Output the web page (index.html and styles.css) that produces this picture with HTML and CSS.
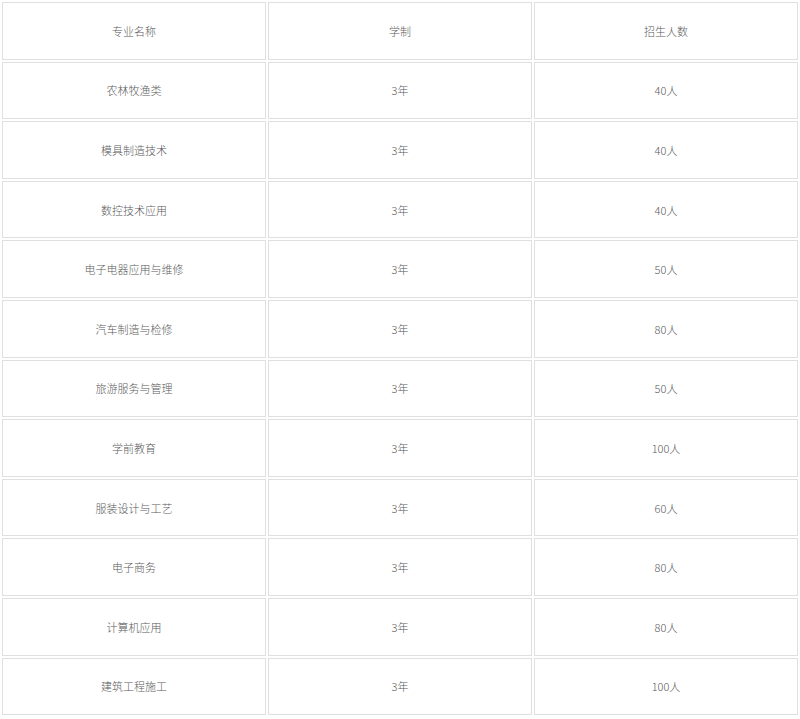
FILE: index.html
```html
<!DOCTYPE html>
<html lang="zh">
<head>
<meta charset="utf-8">
<link rel="stylesheet" href="styles.css">
</head>
<body>
<table class="majors">
  <tr><td>专业名称</td><td>学制</td><td>招生人数</td></tr>
  <tr><td>农林牧渔类</td><td>3年</td><td>40人</td></tr>
  <tr><td>模具制造技术</td><td>3年</td><td>40人</td></tr>
  <tr><td>数控技术应用</td><td>3年</td><td>40人</td></tr>
  <tr><td>电子电器应用与维修</td><td>3年</td><td>50人</td></tr>
  <tr><td>汽车制造与检修</td><td>3年</td><td>80人</td></tr>
  <tr><td>旅游服务与管理</td><td>3年</td><td>50人</td></tr>
  <tr><td>学前教育</td><td>3年</td><td>100人</td></tr>
  <tr><td>服装设计与工艺</td><td>3年</td><td>60人</td></tr>
  <tr><td>电子商务</td><td>3年</td><td>80人</td></tr>
  <tr><td>计算机应用</td><td>3年</td><td>80人</td></tr>
  <tr><td>建筑工程施工</td><td>3年</td><td>100人</td></tr>
</table>
</body>
</html>
```
FILE: styles.css
```css
html, body {
  margin: 0;
  padding: 0;
  background: #fff;
}
.majors {
  width: 800px;
  border-collapse: separate;
  border-spacing: 2px;
  table-layout: fixed;
  font-family: "Noto Sans CJK SC", "Noto Sans", sans-serif;
  font-size: 11px;
  font-weight: 300;
  color: #5a5a5a;
}
.majors tr {
  height: 57.6px;
}
.majors td {
  border: 1px solid #e0e0e0;
  text-align: center;
  vertical-align: middle;
  padding: 0;
}
```
